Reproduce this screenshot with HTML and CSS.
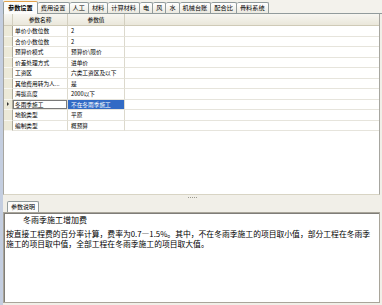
FILE: index.html
```html
<!DOCTYPE html>
<html lang="zh-CN">
<head>
<meta charset="utf-8">
<link rel="stylesheet" href="styles.css">
</head>
<body>
<div class="app">
  <div class="tabs">
    <div class="tab active">参数设置</div>
    <div class="tab">费用设置</div>
    <div class="tab">人工</div>
    <div class="tab">材料</div>
    <div class="tab">计算材料</div>
    <div class="tab">电</div>
    <div class="tab">风</div>
    <div class="tab">水</div>
    <div class="tab">机械台账</div>
    <div class="tab">配合比</div>
    <div class="tab">骨料系统</div>
  </div>
  <div class="grid-panel">
    <div class="row head"><div class="rh"></div><div class="c c1">参数名称</div><div class="c c2">参数值</div><div class="c c3"></div></div>
    <div class="row"><div class="rh"></div><div class="c c1">单价小数位数</div><div class="c c2">2</div><div class="c c3"></div></div>
    <div class="row"><div class="rh"></div><div class="c c1">合价小数位数</div><div class="c c2">2</div><div class="c c3"></div></div>
    <div class="row"><div class="rh"></div><div class="c c1">预算价模式</div><div class="c c2">预算价\限价</div><div class="c c3"></div></div>
    <div class="row"><div class="rh"></div><div class="c c1">价差处理方式</div><div class="c c2">进单价</div><div class="c c3"></div></div>
    <div class="row"><div class="rh"></div><div class="c c1">工资区</div><div class="c c2">六类工资区及以下</div><div class="c c3"></div></div>
    <div class="row"><div class="rh"></div><div class="c c1">其他费用转为人...</div><div class="c c2">是</div><div class="c c3"></div></div>
    <div class="row"><div class="rh"></div><div class="c c1">海拔高度</div><div class="c c2">2000以下</div><div class="c c3"></div></div>
    <div class="row sel"><div class="rh"><span class="arrow"></span></div><div class="c c1">冬雨季施工</div><div class="c c2">不在冬雨季施工</div><div class="c c3"></div></div>
    <div class="row"><div class="rh"></div><div class="c c1">地貌类型</div><div class="c c2">平原</div><div class="c c3"></div></div>
    <div class="row"><div class="rh"></div><div class="c c1">编制类型</div><div class="c c2">概预算</div><div class="c c3"></div></div>
  </div>
  <div class="splitter"><span class="grip"></span></div>
  <div class="tabs2"><div class="tab2">参数说明</div></div>
  <div class="desc">
    <div class="title">冬雨季施工增加费</div>
    <div class="body">按直接工程费的百分率计算，费率为0.7—1.5%。其中，不在冬雨季施工的项目取小值，部分工程在冬雨季<br>施工的项目取中值，全部工程在冬雨季施工的项目取大值。</div>
  </div>
</div>
</body>
</html>
```

FILE: styles.css
```css
html, body {
  margin: 0;
  padding: 0;
}
body {
  width: 382px;
  height: 305px;
  overflow: hidden;
  background: #f1efe8;
  font-family: "Noto Sans CJK SC", "Noto Sans", sans-serif;
  color: #000;
}
.app {
  display: flex;
  flex-direction: column;
  height: 305px;
  box-sizing: border-box;
  border-left: 3px solid #c4cee0;
}
.tabs {
  height: 14px;
  box-sizing: border-box;
  display: flex;
  align-items: flex-end;
  border-bottom: 1px solid #919b9c;
  background: #f3f2ec;
}
.tab {
  height: 11px;
  box-sizing: border-box;
  padding: 0 3px;
  border: 1px solid #919b9c;
  border-bottom: none;
  border-left-width: 0;
  border-radius: 2px 2px 0 0;
  background: linear-gradient(#ffffff, #ebe9e0);
  font-size: 6.2px;
  line-height: 10px;
  white-space: nowrap;
  margin-bottom: 0;
}
.tab.active + .tab {
  border-left-width: 0;
}
.tab.active {
  height: 13px;
  border-left-width: 1px;
  padding: 0 4px;
  margin-bottom: -1px;
  background: #fcfcfb;
  font-weight: bold;
  line-height: 12px;
  border-top: 1px solid #e3a14a;
}
.grid-panel {
  height: 181px;
  box-sizing: border-box;
  background: #fff;
  border-left: 1px solid #a7a6a0;
  border-right: 1px solid #a7a6a0;
  border-bottom: 1px solid #d8d4c4;
  margin-right: 2px;
}
.row {
  display: grid;
  grid-template-columns: 9px 55px 57px 1fr;
  height: 10.5px;
  box-sizing: border-box;
}
.row .c {
  box-sizing: border-box;
  font-size: 5.7px;
  line-height: 10px;
  padding-left: 2px;
  white-space: nowrap;
  overflow: hidden;
  border-bottom: 1px solid #e6e4dc;
}
.row .c1, .row .c2 {
  border-right: 1px solid #dcd9cd;
}
.row .c2 {
  padding-left: 3px;
}
.rh {
  background: #ece9d8;
  border-right: 1px solid #aca899;
  border-bottom: 1px solid #f8f7f2;
  box-sizing: border-box;
  display: flex;
  align-items: center;
  justify-content: center;
}
.row.head {
  height: 12px;
  background: linear-gradient(#f7f6f1, #e9e6d9);
}
.row.head .c {
  text-align: center;
  padding-left: 0;
  line-height: 11px;
  border-bottom: 1px solid #cfcab7;
  border-right: 1px solid #d3cfbf;
}
.row.head .c3 {
  border-right: none;
}
.row.head .rh {
  background: transparent;
  border-bottom: 1px solid #cfcab7;
  border-right: 1px solid #d3cfbf;
}
.row.sel .c1 {
  box-shadow: inset 0 0 0 1px #7a7a7a;
}
.row.sel .c2 {
  background: #316ac5;
  color: #fff;
}
.arrow {
  width: 0;
  height: 0;
  border-left: 2px solid #333;
  border-top: 2px solid transparent;
  border-bottom: 2px solid transparent;
}
.splitter {
  height: 5px;
  display: flex;
  align-items: center;
  justify-content: center;
}
.grip {
  width: 9px;
  height: 0;
  border-top: 1px dotted #9c9a90;
}
.tabs2 {
  height: 12px;
  box-sizing: border-box;
  display: flex;
  align-items: flex-end;
  padding-left: 4px;
}
.tab2 {
  height: 11px;
  box-sizing: border-box;
  padding: 0 3px;
  border: 1px solid #919b9c;
  border-bottom: none;
  border-radius: 2px 2px 0 0;
  background: #fcfcfb;
  font-size: 6px;
  line-height: 10px;
  white-space: nowrap;
}
.desc {
  height: 91px;
  box-sizing: border-box;
  margin-right: 2px;
  background: #fff;
  border: 1px solid #a9a59a;
  box-shadow: inset 1px 1px 0 #7f7d78;
  padding: 2px 1px 0 2px;
}
.title {
  font-size: 8px;
  line-height: 10px;
  padding-left: 17px;
  white-space: nowrap;
}
.body {
  margin-top: 4px;
  font-size: 7.8px;
  line-height: 10px;
  white-space: nowrap;
}
```
